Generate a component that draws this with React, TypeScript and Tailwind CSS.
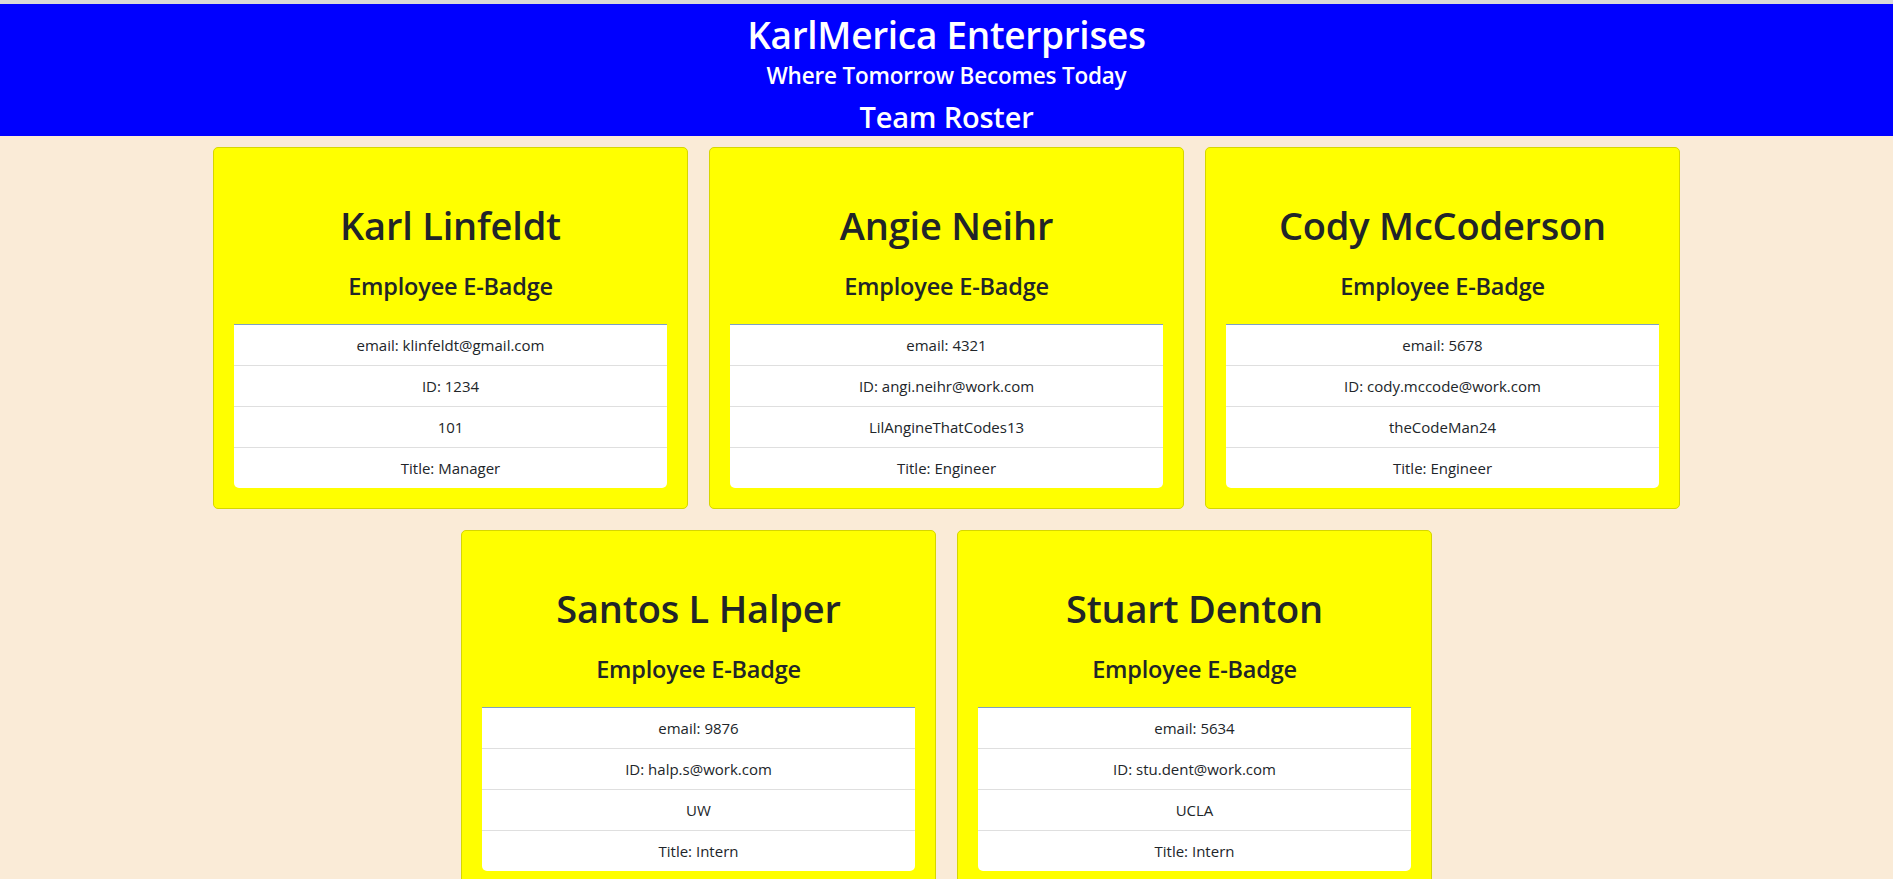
import React from "react";

type Emp = { name: string; email: string; id: string; extra: string; title: string };

const employees: Emp[] = [
  { name: "Karl Linfeldt", email: "klinfeldt@gmail.com", id: "1234", extra: "101", title: "Manager" },
  { name: "Angie Neihr", email: "4321", id: "angi.neihr@work.com", extra: "LilAngineThatCodes13", title: "Engineer" },
  { name: "Cody McCoderson", email: "5678", id: "cody.mccode@work.com", extra: "theCodeMan24", title: "Engineer" },
  { name: "Santos L Halper", email: "9876", id: "halp.s@work.com", extra: "UW", title: "Intern" },
  { name: "Stuart Denton", email: "5634", id: "stu.dent@work.com", extra: "UCLA", title: "Intern" },
];

function Card({ e }: { e: Emp }) {
  return (
    <div className="w-[475px] rounded-[5px] border border-[#d6d600] bg-[#ffff00] px-5 pb-5 pt-[53px]">
      <h1 className="text-center text-[38px] leading-[48px] font-semibold tracking-[-0.2px] text-[#212529]">{e.name}</h1>
      <h4 className="mt-[23px] text-center text-[23.5px] leading-[29px] font-semibold tracking-[-0.2px] text-[#212529]">Employee E-Badge</h4>
      <ul className="mt-[23px] rounded-b-[5px] border-t border-[#7ea0c4] bg-white text-center text-[15px] text-[#212529]">
        <li className="h-[41px] border-b border-[#dfdfdf] leading-[40px]">email: {e.email}</li>
        <li className="h-[41px] border-b border-[#dfdfdf] leading-[40px]">ID: {e.id}</li>
        <li className="h-[41px] border-b border-[#dfdfdf] leading-[40px]">{e.extra}</li>
        <li className="h-[40px] leading-[40px]">Title: {e.title}</li>
      </ul>
    </div>
  );
}

export default function App() {
  return (
    <div className="min-h-screen bg-[#faebd7] font-['Open_Sans',sans-serif]">
      <div className="h-[4px] bg-[#d9d9d9]" />
      <header className="h-[132px] bg-[#0000ff] text-center text-white">
        <h1 className="pt-[8px] text-[37px] leading-[46px] font-semibold tracking-[-0.3px]">KarlMerica Enterprises</h1>
        <h4 className="mt-[3px] text-[22.5px] leading-[30px] font-semibold tracking-[-0.2px]">Where Tomorrow Becomes Today</h4>
        <h3 className="mt-[9px] text-[29px] leading-[34px] font-semibold tracking-[-0.2px]">Team Roster</h3>
      </header>
      <main className="flex flex-wrap justify-center gap-[21px] pt-[11px] pb-[20px]">
        <div className="flex w-full justify-center gap-[21px]">
          {employees.slice(0, 3).map((e) => (
            <Card key={e.name} e={e} />
          ))}
        </div>
        <div className="flex w-full justify-center gap-[21px]">
          {employees.slice(3).map((e) => (
            <Card key={e.name} e={e} />
          ))}
        </div>
      </main>
    </div>
  );
}
